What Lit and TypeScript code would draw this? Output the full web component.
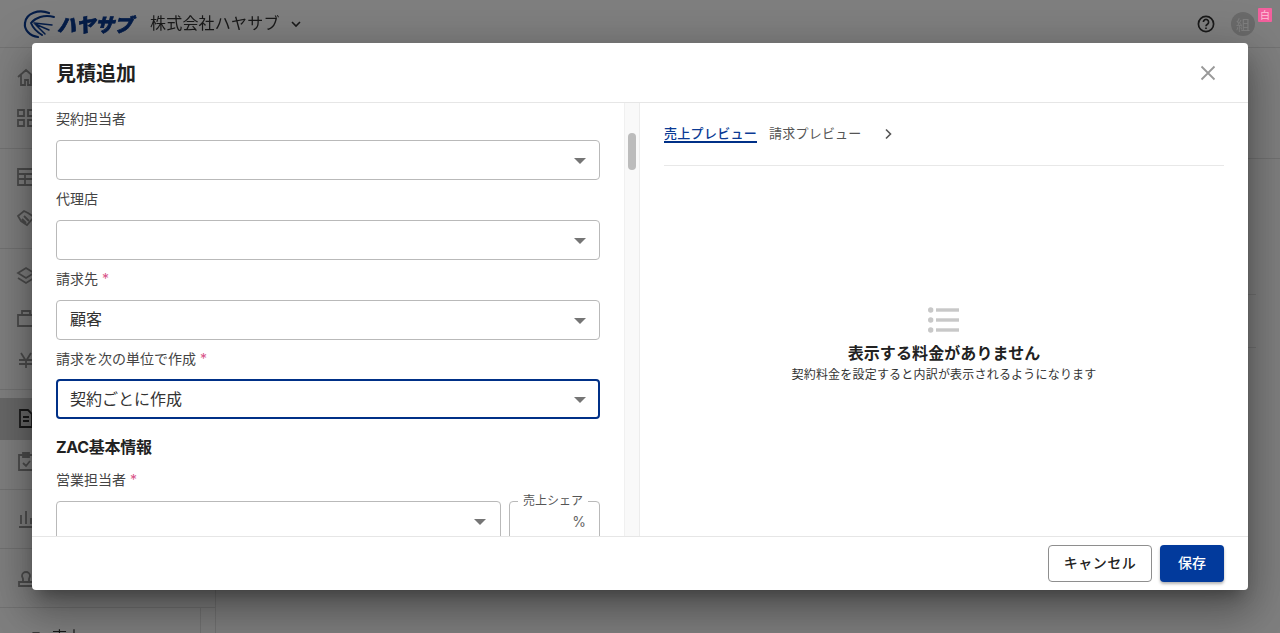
import { LitElement, css, html, svg, unsafeCSS } from 'lit'
import { customElement } from 'lit/decorators.js'

const FONT = unsafeCSS(`Inter, "Noto Sans CJK JP", "Noto Sans", sans-serif`)

const railIcons = [
  { top: 67, icon: svg`<path d="M3 10l8-7 8 7M6 8v10h4v-5h3v5h3V8" />` },
  { top: 107, icon: svg`<path d="M3 3h6v6H3zM13 3h6v6h-6zM3 13h6v6H3zM13 13h6v6h-6z" />` },
  { top: 166, icon: svg`<path d="M3 3h16v16H3zM3 8h16M3 13h16M10 8v11" />` },
  { top: 207, icon: svg`<path d="M3 9l6-5 4 2 6 4-7 8-6-4zM9 9l5 5M7 12l4 4" />` },
  { top: 265, icon: svg`<path d="M11 3l8 5-8 5-8-5zM3 13l8 5 8-5" />` },
  { top: 307, icon: svg`<path d="M3 8h16v11H3zM7 8V4h8v4" />` },
  { top: 349, icon: svg`<path d="M6 4l5 8 5-8M4 11h14M4 15h14M11 12v7" />` },
  { top: 407, icon: svg`<path d="M5 3h8l4 4v13H5zM8 10h6M8 14h6" />`, active: true },
  { top: 450, icon: svg`<path d="M4 5h14v15H4zM8 3h6v4H8zM8 13l3 3 4-5" />` },
  { top: 508, icon: svg`<path d="M4 19h15M6 16V7M11 16V3M16 16v-6" />` },
  { top: 565, icon: svg`<path d="M4 21h14v-4H4zM8 17v-3l-1-3a4 4 0 1 1 8 0l-1 3v3" />` },
]

@customElement('app-root')
export class AppRoot extends LitElement {
  static styles = css`
    :host {
      display: block;
      width: 1280px;
      height: 633px;
      overflow: hidden;
      position: relative;
      background: #fff;
      font-family: ${FONT};
      color: #222;
    }
    * { box-sizing: border-box; }

    .app { width: 1280px; height: 633px; display: flex; flex-direction: column; filter: blur(0.5px); }
    .topbar {
      height: 48px;
      flex: none;
      display: flex;
      align-items: center;
      padding: 0 8px 0 24px;
      border-bottom: 1px solid #e4e4e4;
    }
    .logo { width: 112px; height: 28px; flex: none; overflow: visible; }
    .brand { font-family: "Noto Sans CJK JP", sans-serif; font-weight: 900; font-style: italic; }
    .company { font-size: 16px; margin-left: 14px; color: #333; letter-spacing: 0.2px; padding-bottom: 3px; }
    .chev { margin-left: 10px; width: 12px; height: 12px; }
    .spacer { flex: 1; }
    .help { width: 20px; height: 20px; margin-right: 15px; }
    .avatar {
      width: 24px; height: 24px; border-radius: 50%;
      background: #d4d4d4; color: #fff; font-size: 14px;
      display: flex; align-items: center; justify-content: center;
      margin-right: 17px;
    }
    .badge {
      position: absolute; left: 1258px; top: 8px;
      width: 14px; height: 14px; background: #f4609e; border-radius: 1px;
      color: #ffc4da; font-size: 10px; line-height: 14px; text-align: center;
    }
    .under { flex: 1; display: flex; min-height: 0; }
    .rail { width: 216px; border-right: 1px solid #e4e4e4; position: relative; flex: none; overflow: hidden; }
    .rail svg {
      position: absolute; left: 15px; width: 22px; height: 22px;
      fill: none; stroke: #999; stroke-width: 1.8;
    }
    .rail svg.on { stroke: #333; }
    .rail hr { position: absolute; left: 0; width: 100%; margin: 0; border: 0; border-top: 1px solid #e4e4e4; }
    .active { position: absolute; left: 0; top: 350px; height: 42px; width: 100%; background: #d0d0d0; }
    .sub-line { position: absolute; left: 200px; top: 559px; bottom: 0; border-left: 1px solid #e4e4e4; }
    .sales { position: absolute; left: 52px; top: 577px; font-size: 15px; color: #333; }
    .sales-caret {
      position: absolute; left: 32px; top: 584px;
      border-left: 4px solid transparent; border-right: 4px solid transparent; border-top: 5px solid #777;
    }
    .content { flex: 1; position: relative; }
    .content hr { position: absolute; left: 0; right: 0; margin: 0; border: 0; border-top: 1px solid #e4e4e4; }
    .content hr.short { right: 24px; }

    .scrim { position: absolute; inset: 0; background: rgba(0, 0, 0, 0.5); }

    .dialog {
      position: absolute; left: 32px; top: 43px;
      width: 1216px; height: 547px;
      background: #fff; border-radius: 4px;
      display: flex; flex-direction: column;
      overflow: hidden;
      box-shadow: 0 11px 15px -7px rgba(0,0,0,.3), 0 24px 38px 3px rgba(0,0,0,.2), 0 9px 46px 8px rgba(0,0,0,.18);
    }
    .dialog-head {
      height: 60px; flex: none;
      display: flex; align-items: center; justify-content: space-between;
      padding: 0 32px 0 24px;
      border-bottom: 1px solid #e6e6e6;
    }
    .dialog-head h2 { margin: 0; padding-top: 2px; font-size: 20px; font-weight: 700; color: #222; line-height: 1; }
    .close { width: 16px; height: 16px; stroke: #999; stroke-width: 1.8; fill: none; }

    .dialog-body { flex: 1; display: flex; min-height: 0; }
    .form { width: 592px; flex: none; padding: 0 24px; overflow: hidden; }
    .track {
      width: 16px; flex: none; background: #f9f9f9;
      border-left: 1px solid #f0f0f0; border-right: 1px solid #ececec;
      padding-top: 30px; display: flex; justify-content: center;
    }
    .thumb { width: 8px; height: 37px; border-radius: 4px; background: #bcbcbc; }

    .label { font-size: 14px; line-height: 20px; color: #444; height: 20px; }
    .req { color: #d8558a; }
    .field { display: flex; flex-direction: column; gap: 11px; margin-bottom: 9px; }
    .field:first-child { margin-top: 6px; }
    .select {
      height: 40px; border: 1px solid #b9b9b9; border-radius: 4px;
      display: flex; align-items: center; justify-content: space-between;
      padding: 0 13px; font-size: 16px; color: #333;
    }
    .select > span { position: relative; top: -2px; }
    .select.focus { border: 2px solid #003087; padding: 0 12px; margin-top: -1px; }
    .select.focus > span { top: -1px; }
    .caret { width: 0; height: 0; border-left: 6px solid transparent; border-right: 6px solid transparent; border-top: 6px solid #757575; margin-top: 2px; }
    .section { font-size: 16px; line-height: 24px; font-weight: 700; color: #222; margin: 16px 0 11px; letter-spacing: -0.3px; }
    .pair { display: flex; gap: 8px; }
    .pair .select { flex: 1; padding-right: 14px; }
    .share {
      width: 91px; height: 40px; flex: none; position: relative;
      border: 1px solid #b9b9b9; border-radius: 4px;
      display: flex; align-items: center; justify-content: flex-end;
      padding-right: 13px; font-size: 14px; color: #666;
    }
    .share span {
      position: absolute; left: 8px; top: -8px; padding: 0 5px;
      background: #fff; font-size: 12px; line-height: 14px; color: #555;
    }

    .preview { flex: 1; min-width: 0; padding: 0 24px; display: flex; flex-direction: column; }
    .tabs { height: 63px; flex: none; display: flex; align-items: flex-start; padding-top: 20px; border-bottom: 1px solid #e8e8e8; font-size: 13px; letter-spacing: 0.2px; color: #555; }
    .tab { line-height: 20px; margin-right: 12px; }
    .tab.on { color: #0b3a94; font-weight: 500; border-bottom: 2px solid #003087; height: 20px; letter-spacing: 0.3px; }
    .tab-next { width: 12px; height: 12px; margin: 5px 0 0 8px; stroke: #555; stroke-width: 1.6; fill: none; }
    .empty { flex: 1; display: flex; flex-direction: column; align-items: center; padding-top: 141px; }
    .empty svg { width: 32px; height: 26px; }
    .empty b { font-size: 16px; line-height: 24px; margin-top: 8px; color: #222; letter-spacing: 0.1px; }
    .empty small { font-size: 12px; line-height: 18px; color: #333; margin-top: 1px; letter-spacing: 0.2px; }

    .dialog-foot {
      height: 54px; flex: none;
      display: flex; justify-content: flex-end; align-items: center; gap: 8px;
      padding: 0 24px;
      border-top: 1px solid #e6e6e6;
    }
    button { font-family: inherit; font-size: 14px; font-weight: 500; height: 37px; border-radius: 4px; padding: 0 0 3px; cursor: pointer; }
    .cancel { width: 104px; background: #fff; border: 1px solid #8e8e8e; color: #222; letter-spacing: 0.5px; }
    .save { width: 64px; background: #023a9c; border: 0; color: #fff; box-shadow: 0 2px 3px rgba(0,0,0,.3); }
  `

  private field (label: string, value = '', required = false, focus = false) {
    return html`
      <div class="field">
        <div class="label">${label}${required ? html` <span class="req">*</span>` : ''}</div>
        <div class="select ${focus ? 'focus' : ''}"><span>${value}</span><i class="caret"></i></div>
      </div>
    `
  }

  render () {
    return html`
      <div class="app">
        <header class="topbar">
          <svg class="logo" viewBox="0 0 112 28">
            <g fill="none" stroke="#0a3a91" stroke-linecap="round">
              <path d="M25 3 C15 -1 2 3 1 13 C0 20 6 26 14 27" stroke-width="2.2" />
              <path d="M30 7 C20 4 11 8 7 13 C9 18 13 22 18 25" stroke-width="2" />
              <path d="M10 13 L28 15 M11 14 L25 20 M12 15 L21 24" stroke-width="1.5" />
            </g>
            <text class="brand" x="33" y="22" font-size="19" fill="#0a3a91" stroke="#0a3a91" stroke-width="0.7">ハヤサブ</text>
          </svg>
          <span class="company">株式会社ハヤサブ</span>
          <svg class="chev" viewBox="0 0 12 12" fill="none" stroke="#333" stroke-width="1.6"><path d="M2 4l4 4 4-4" /></svg>
          <span class="spacer"></span>
          <svg class="help" viewBox="0 0 20 20" fill="none" stroke="#333" stroke-width="1.7">
            <circle cx="10" cy="10" r="7.6" />
            <path d="M7.4 8a2.6 2.6 0 1 1 4 2.2c-.9.6-1.4 1-1.4 2" />
            <path d="M10 13.6v1.4" />
          </svg>
          <div class="avatar">組</div>
        </header>
        <div class="under">
          <nav class="rail">
            <div class="active"></div>
            ${railIcons.map(i => html`<svg class="${i.active ? 'on' : ''}" viewBox="0 0 22 22" style="top:${i.top - 48}px">${i.icon}</svg>`)}
            <hr style="top:100px" /><hr style="top:200px" /><hr style="top:341px" /><hr style="top:441px" /><hr style="top:500px" /><hr style="top:559px" />
            <div class="sub-line"></div>
            <i class="sales-caret"></i>
            <div class="sales">売上</div>
          </nav>
          <main class="content">
            <hr style="top:110px" /><hr class="short" style="top:246px" /><hr class="short" style="top:299px" />
          </main>
        </div>
      </div>

      <div class="scrim"></div>
      <div class="badge">白</div>

      <section class="dialog">
        <div class="dialog-head">
          <h2>見積追加</h2>
          <svg class="close" viewBox="0 0 16 16"><path d="M1.5 1.5l13 13M14.5 1.5l-13 13" /></svg>
        </div>
        <div class="dialog-body">
          <div class="form">
            ${this.field('契約担当者')}
            ${this.field('代理店')}
            ${this.field('請求先', '顧客', true)}
            ${this.field('請求を次の単位で作成', '契約ごとに作成', true, true)}
            <div class="section">ZAC基本情報</div>
            <div class="field">
              <div class="label">営業担当者 <span class="req">*</span></div>
              <div class="pair">
                <div class="select"><span></span><i class="caret"></i></div>
                <div class="share"><span>売上シェア</span>%</div>
              </div>
            </div>
          </div>
          <div class="track"><div class="thumb"></div></div>
          <div class="preview">
            <div class="tabs">
              <div class="tab on">売上プレビュー</div>
              <div class="tab">請求プレビュー</div>
              <svg class="tab-next" viewBox="0 0 12 12"><path d="M4 1.5L8.5 6 4 10.5" /></svg>
            </div>
            <div class="empty">
              <svg viewBox="0 0 32 26" fill="#c8c8c8">
                <circle cx="2.7" cy="3" r="2.7" /><rect x="8" y="1.3" width="23" height="3.4" />
                <circle cx="2.7" cy="13" r="2.7" /><rect x="8" y="11.3" width="23" height="3.4" />
                <circle cx="2.7" cy="23" r="2.7" /><rect x="8" y="21.3" width="23" height="3.4" />
              </svg>
              <b>表示する料金がありません</b>
              <small>契約料金を設定すると内訳が表示されるようになります</small>
            </div>
          </div>
        </div>
        <div class="dialog-foot">
          <button class="cancel">キャンセル</button>
          <button class="save">保存</button>
        </div>
      </section>
    `
  }
}
